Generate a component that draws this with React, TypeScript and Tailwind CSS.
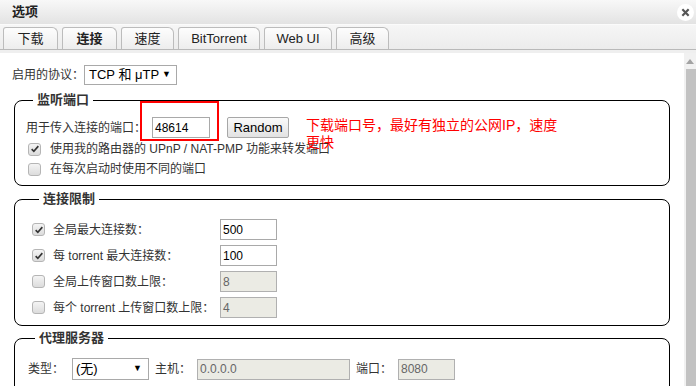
import React from "react";

const font = "font-['Liberation_Sans','Noto_Sans_CJK_SC',sans-serif]";

const tabs = ["下载", "连接", "速度", "BitTorrent", "Web UI", "高级"];
const tabWidths = ["w-[55px]", "w-[55px]", "w-[53px]", "w-[82px]", "w-[68px]", "w-[53px]"];

const CheckBox: React.FC<{ checked?: boolean }> = ({ checked }) => (
  <span className="flex h-[13px] w-[13px] shrink-0 items-center justify-center rounded-[3px] border border-[#b5b5b5] bg-gradient-to-b from-[#f4f4f4] to-[#dcdcdc]">
    {checked && (
      <svg viewBox="0 0 12 12" className="h-[10px] w-[10px]">
        <path d="M2 6.2 L4.6 8.8 L10 2.6" fill="none" stroke="#333" strokeWidth="2" />
      </svg>
    )}
  </span>
);

const TextBox: React.FC<{ value: string; disabled?: boolean; w: string }> = ({ value, disabled, w }) => (
  <div
    className={`flex h-[21px] shrink-0 items-center border px-[2px] text-[12px] ${w} ${
      disabled ? "border-[#b0b0b0] bg-[#ebebe4] text-[#666]" : "border-[#a9a9a9] bg-white text-black"
    }`}
  >
    {value}
  </div>
);

const Legend: React.FC<{ children: React.ReactNode }> = ({ children }) => (
  <legend className="ml-[7px] px-[4px] text-[13px] font-bold leading-[16px] text-[#333]">{children}</legend>
);

const LimitRow: React.FC<{ label: string; value: string; checked?: boolean }> = ({ label, value, checked }) => (
  <div className="flex h-[21px] items-center">
    <CheckBox checked={checked} />
    <span className="ml-[8px] w-[167px] shrink-0 whitespace-nowrap text-[12px] text-[#333]">{label}</span>
    <TextBox value={value} disabled={!checked} w="w-[57px]" />
  </div>
);

export default function App() {
  return (
    <div className={`h-[386px] w-[696px] overflow-hidden bg-white ${font}`}>
      {/* title bar */}
      <div className="flex h-[24px] items-center justify-between bg-gradient-to-b from-[#f8f8f8] to-[#e3e3e3] pl-[12px] pr-[2px]">
        <span className="text-[13px] font-bold text-[#222]">选项</span>
        <span className="flex h-[17px] w-[17px] items-center justify-center rounded-full bg-white">
          <svg viewBox="0 0 10 10" className="h-[9px] w-[9px]">
            <path d="M1.5 1.5 L8.5 8.5 M8.5 1.5 L1.5 8.5" stroke="#555" strokeWidth="2.4" />
          </svg>
        </span>
      </div>

      {/* tabs */}
      <div className="flex h-[26px] items-end gap-[4px] border-t border-[#fbfbfb] border-b border-b-[#b9b9b9] bg-gradient-to-b from-[#f6f6f6] to-[#ececec] pl-[3px]">
        {tabs.map((t, i) => (
          <div
            key={t}
            className={`flex h-[22px] items-center justify-center rounded-tl-[3px] rounded-tr-[6px] border border-b-0 border-[#bcbcbc] bg-gradient-to-b from-[#fdfdfd] to-[#ededed] text-[13px] text-[#222] ${
              tabWidths[i]
            } ${i === 1 ? "font-bold" : ""}`}
          >
            {t}
          </div>
        ))}
      </div>
      <div className="h-[3px] bg-[#efefef]" />

      <div className="flex h-[333px]">
        {/* content */}
        <div className="relative w-[684px]">
          <div className="mt-[12px] flex items-center pl-[12px]">
            <span className="whitespace-nowrap text-[12px] text-[#333]">启用的协议：</span>
            <div className="flex h-[20px] w-[93px] items-center justify-between border border-[#a9a9a9] bg-white pl-[4px] pr-[5px] text-[13px] text-black">
              <span>TCP 和 μTP</span>
              <span className="text-[9px]">▼</span>
            </div>
          </div>

          <fieldset className="ml-[14px] mt-[7px] w-[656px] rounded-[8px] border border-black pb-[6px] pl-[11px] pt-[9px]">
            <Legend>监听端口</Legend>
            <div className="flex h-[21px] items-center">
              <span className="w-[126px] shrink-0 whitespace-nowrap text-[12px] text-[#333]">用于传入连接的端口：</span>
              <TextBox value="48614" w="w-[58px]" />
              <button className="ml-[17px] h-[21px] w-[62px] shrink-0 rounded-[2px] border border-[#a7a7a7] bg-gradient-to-b from-[#fafafa] to-[#e2e2e2] text-[13px] text-black">
                Random
              </button>
            </div>
            <div className="ml-[2px] mt-[1px] flex h-[20px] items-center">
              <CheckBox checked />
              <span className="ml-[9px] whitespace-nowrap text-[12px] text-[#333]">使用我的路由器的 UPnP / NAT-PMP 功能来转发端口</span>
            </div>
            <div className="ml-[2px] flex h-[20px] items-center">
              <CheckBox />
              <span className="ml-[9px] whitespace-nowrap text-[12px] text-[#333]">在每次启动时使用不同的端口</span>
            </div>
          </fieldset>

          <fieldset className="ml-[14px] mt-[5px] w-[656px] rounded-[8px] border border-black pb-[7px] pl-[17px] pt-[12px]">
            <Legend>连接限制</Legend>
            <div className="flex flex-col gap-[5px]">
              <LimitRow label="全局最大连接数：" value="500" checked />
              <LimitRow label="每 torrent 最大连接数：" value="100" checked />
              <LimitRow label="全局上传窗口数上限：" value="8" />
              <LimitRow label="每个 torrent 上传窗口数上限：" value="4" />
            </div>
          </fieldset>

          <fieldset className="ml-[14px] mt-[4px] h-[80px] w-[656px] rounded-[8px] border border-black pl-[13px] pt-[12px]">
            <Legend>代理服务器</Legend>
            <div className="flex h-[22px] items-center">
              <span className="w-[44px] shrink-0 text-[12px] text-[#333]">类型：</span>
              <div className="flex h-[22px] w-[77px] shrink-0 items-center justify-between border border-[#a9a9a9] bg-white pl-[3px] pr-[6px] text-[13px] text-black">
                <span>(无)</span>
                <span className="text-[9px]">▼</span>
              </div>
              <span className="ml-[6px] w-[42px] shrink-0 text-[12px] text-[#333]">主机：</span>
              <TextBox value="0.0.0.0" disabled w="w-[153px]" />
              <span className="ml-[6px] w-[42px] shrink-0 text-[12px] text-[#333]">端口：</span>
              <TextBox value="8080" disabled w="w-[57px]" />
            </div>
          </fieldset>

          {/* annotation */}
          <div className="absolute left-[140px] top-[48px] h-[40px] w-[79px] border-2 border-[#ff0000]" />
          <div className="absolute left-[306px] top-[64px] whitespace-nowrap text-[14px] leading-[17px] text-[#ff0000]">
            下载端口号，最好有独立的公网IP，速度
            <br />
            更快
          </div>
        </div>

        {/* scrollbar */}
        <div className="flex w-[12px] flex-col items-end bg-[#f1f1f1]">
          <div className="flex h-[17px] w-full items-center justify-center">
            <svg viewBox="0 0 8 5" className="h-[5px] w-[8px]">
              <path d="M0 5 L4 0 L8 5 Z" fill="#a3a3a3" />
            </svg>
          </div>
          <div className="h-full w-[10px] bg-[#c2c2c2]" />
        </div>
      </div>
    </div>
  );
}
